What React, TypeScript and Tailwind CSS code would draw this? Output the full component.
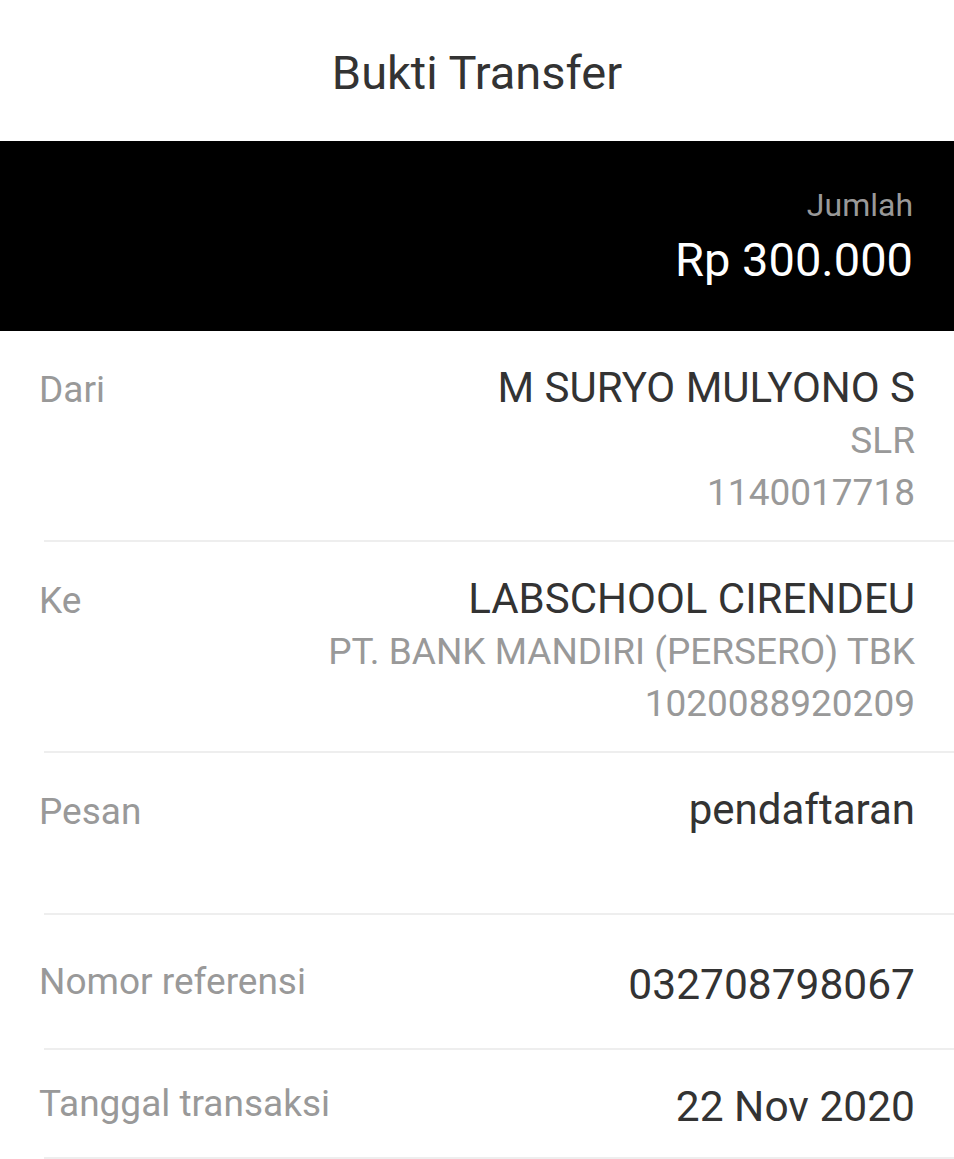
import React from "react";

type Line = { text: string; main?: boolean };

const rows: { label: string; lines: Line[] }[] = [
  {
    label: "Dari",
    lines: [
      { text: "M SURYO MULYONO S", main: true },
      { text: "SLR" },
      { text: "1140017718" },
    ],
  },
  {
    label: "Ke",
    lines: [
      { text: "LABSCHOOL CIRENDEU", main: true },
      { text: "PT. BANK MANDIRI (PERSERO) TBK" },
      { text: "1020088920209" },
    ],
  },
];

function Divider() {
  return <div className="ml-[44px] h-[2px] bg-[#eeeeee]" />;
}

function StackRow({ label, lines, tall }: { label: string; lines: Line[]; tall?: boolean }) {
  return (
    <div
      className={`flex items-start justify-between pl-[39px] pr-[39px] pt-[30px] pb-[21px] ${
        tall ? "h-[160px]" : ""
      }`}
    >
      <p className="text-[37px] leading-[58px] text-[#999999]">{label}</p>
      <div className="flex flex-col items-end text-right">
        {lines.map((line) =>
          line.main ? (
            <p key={line.text} className="text-[42px] leading-[54px] text-[#333333]">
              {line.text}
            </p>
          ) : (
            <p key={line.text} className="text-[37px] leading-[52px] text-[#999999]">
              {line.text}
            </p>
          )
        )}
      </div>
    </div>
  );
}

function InlineRow({ label, value, height }: { label: string; value: string; height: string }) {
  return (
    <div className={`flex items-center justify-between pl-[39px] pr-[39px] ${height}`}>
      <p className="text-[37px] leading-[48px] text-[#999999]">{label}</p>
      <p className="mt-[7px] text-[42.5px] leading-[54px] text-[#333333]">{value}</p>
    </div>
  );
}

export default function App() {
  return (
    <div className="w-[954px] bg-white font-['Roboto',sans-serif]">
      <header className="flex h-[141px] items-center justify-center">
        <h1 className="mt-[4px] text-[47px] leading-[56px] text-[#333333]">Bukti Transfer</h1>
      </header>

      <section className="flex h-[190px] flex-col items-end bg-black pr-[41px] pt-[44px]">
        <p className="text-[32px] leading-[40px] text-[#999999]">Jumlah</p>
        <p className="mt-[7px] text-[47px] leading-[56px] text-white">Rp 300.000</p>
      </section>

      {rows.map((row) => (
        <div key={row.label}>
          <StackRow label={row.label} lines={row.lines} />
          <Divider />
        </div>
      ))}

      <StackRow label="Pesan" lines={[{ text: "pendaftaran", main: true }]} tall />
      <Divider />

      <InlineRow label="Nomor referensi" value="032708798067" height="h-[133px]" />
      <Divider />

      <InlineRow label="Tanggal transaksi" value="22 Nov 2020" height="h-[107px]" />
      <Divider />
    </div>
  );
}
